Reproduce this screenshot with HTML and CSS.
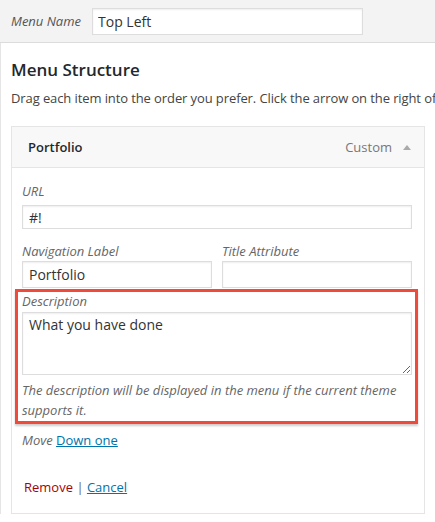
FILE: index.html
```html
<!DOCTYPE html>
<html lang="en">
<head>
  <meta charset="UTF-8">
  <title>Menus</title>
  <link rel="stylesheet" href="styles.css">
</head>
<body>

<!-- Menu name bar -->
<div class="menu-name-bar">
  <label class="menu-name-label" for="menu-name">Menu Name</label>
  <input type="text" id="menu-name" class="menu-name-input" value="Top Left">
</div>

<div class="menu-edit">
  <h3>Menu Structure</h3>
  <p class="drag-instructions">Drag each item into the order you prefer. Click the arrow on the right of</p>

  <div class="menu-item">
    <div class="menu-item-bar">
      <span class="item-title">Portfolio</span>
      <span class="item-controls">
        <span class="item-type">Custom</span>
        <svg class="item-arrow" width="8" height="5" viewBox="0 0 8 5"><polygon points="4,0 8,5 0,5" fill="#aaa"/></svg>
      </span>
    </div>

    <div class="menu-item-settings">
      <div class="field field-url">
        <label for="edit-url">URL</label>
        <input type="text" id="edit-url" class="field-input short" value="#!">
      </div>

      <div class="field-row">
        <div class="field">
          <label for="edit-title">Navigation Label</label>
          <input type="text" id="edit-title" class="field-input" value="Portfolio">
        </div>
        <div class="field">
          <label for="edit-attr">Title Attribute</label>
          <input type="text" id="edit-attr" class="field-input" value="">
        </div>
      </div>

      <!-- highlighted description field -->
      <div class="field-description">
        <label for="edit-desc">Description</label>
        <textarea id="edit-desc" class="desc-input">What you have done</textarea>
        <span class="help">The description will be displayed in the menu if the current theme supports it.</span>
      </div>

      <p class="field-move">Move <a href="#">Down one</a></p>

      <div class="actions">
        <a href="#" class="item-delete">Remove</a> <span class="meta-sep">|</span> <a href="#" class="item-cancel">Cancel</a>
      </div>
    </div>
  </div>
</div>

</body>
</html>
```

FILE: styles.css
```css
/* Global Styles */
body {
  margin: 0;
  font-family: 'Open Sans', sans-serif;
  font-size: 13px;
  color: #444;
  background: #fff;
}

input, textarea {
  font-family: 'Open Sans', sans-serif;
  font-size: 14px;
  color: #333;
  box-sizing: border-box;
  border: 1px solid #ddd;
  box-shadow: inset 0 1px 2px rgba(0, 0, 0, 0.07);
  background: #fff;
  outline: none;
  margin: 0;
}

/* Menu name bar */
.menu-name-bar {
  display: flex;
  align-items: center;
  height: 42px;
  padding: 0 11px;
  background: #f3f3f3;
  border-bottom: 1px solid #dcdcdc;
}

.menu-name-label {
  font-style: italic;
  color: #555;
  margin-right: 11px;
}

.menu-name-input {
  width: 271px;
  height: 27px;
  padding: 2px 5px;
}

/* Menu structure */
.menu-edit {
  border-left: 1px solid #e5e5e5;
  padding-left: 10px;
  overflow: hidden;
}

h3 {
  margin: 15px 0 0;
  font-size: 17px;
  line-height: 24px;
  font-weight: 600;
  color: #23282d;
}

.drag-instructions {
  margin: 6px 0 18px;
  line-height: 20px;
  letter-spacing: -0.1px;
  white-space: nowrap;
}

.menu-item {
  width: 414px;
  box-sizing: border-box;
  border: 1px solid #e5e5e5;
}

.menu-item-bar {
  display: flex;
  align-items: center;
  justify-content: space-between;
  height: 40px;
  padding: 0 13px 0 16px;
  background: #f8f8f8;
  border-bottom: 1px solid #e5e5e5;
}

.item-title {
  font-weight: 600;
  color: #23282d;
}

.item-controls {
  display: flex;
  align-items: center;
}

.item-type {
  color: #777;
  margin-right: 11px;
}

.item-arrow {
  display: block;
}

.menu-item-settings {
  padding: 13px 12px 16px 10px;
}

label {
  display: block;
  font-style: italic;
  color: #666;
  line-height: 20px;
}

.field-input {
  display: block;
  width: 100%;
  height: 27px;
  padding: 2px 6px;
}

.field-input.short {
  height: 24px;
  margin-top: 4px;
}

.field-url {
  margin-bottom: 12px;
}

.field-row {
  display: grid;
  grid-template-columns: 190px 190px;
  gap: 10px;
}

.field-description {
  margin: 1px -6px 0 -7px;
  padding: 0 3px 1px 4px;
  border: 3px solid #f04a3b;
  box-shadow: 0 2px 2px rgba(0, 0, 0, 0.2);
}

.field-description label {
  line-height: 18px;
}

.desc-input {
  display: block;
  width: 100%;
  height: 63px;
  margin-top: 2px;
  padding: 2px 6px;
  line-height: 20px;
  resize: vertical;
}

.help {
  display: block;
  margin-top: 5px;
  font-style: italic;
  color: #666;
  line-height: 20px;
}

.field-move {
  margin: 6px 0 0;
  font-style: italic;
  color: #666;
  line-height: 20px;
}

.field-move a {
  font-style: normal;
  color: #0073aa;
}

.actions {
  margin-top: 27px;
  line-height: 20px;
}

.item-delete {
  color: #a00;
  text-decoration: none;
  padding-left: 2px;
}

.meta-sep {
  color: #666;
}

.item-cancel {
  color: #0073aa;
}
```
